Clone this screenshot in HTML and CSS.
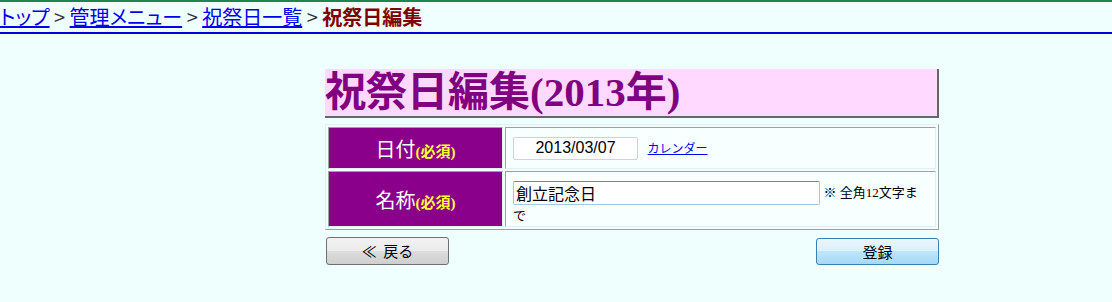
FILE: index.html
```html
<!DOCTYPE html>
<html lang="ja">
<head>
  <meta charset="UTF-8">
  <title>祝祭日編集</title>
  <link rel="stylesheet" href="styles.css">
</head>
<body>
  <div class="crumbs">
    <a href="#">トップ</a> &gt; <a href="#">管理メニュー</a> &gt; <a href="#">祝祭日一覧</a> &gt; <span class="current">祝祭日編集</span>
  </div>
  <div class="main">
    <h1 class="page-title">祝祭日編集(2013年)</h1>
    <table class="form-table">
      <tr class="row-date">
        <th>日付<span class="req">(必須)</span></th>
        <td>
          <input type="text" class="date-input" value="2013/03/07">
          <a href="#" class="cal-link">カレンダー</a>
        </td>
      </tr>
      <tr class="row-name">
        <th>名称<span class="req">(必須)</span></th>
        <td>
          <input type="text" class="name-input" value="創立記念日">
          <span class="note">※ 全角12文字まで</span>
        </td>
      </tr>
    </table>
    <div class="buttons">
      <button class="btn btn-back">≪&nbsp;&nbsp;戻る</button>
      <button class="btn btn-submit">登録</button>
    </div>
  </div>
</body>
</html>
```

FILE: styles.css
```css
* {
  box-sizing: border-box;
}
body {
  margin: 0;
  background-color: #eefffe;
  font-family: "Noto Sans CJK JP", sans-serif;
  color: #000;
}
.crumbs {
  border-top: 2px solid #1c8650;
  border-bottom: 2px solid #0000dd;
  height: 34px;
  line-height: 30px;
  font-size: 20px;
  font-feature-settings: "palt";
  color: #334;
  white-space: nowrap;
}
.crumbs a {
  color: #0000ee;
}
.crumbs .current {
  color: #800000;
  font-weight: bold;
}
.main {
  width: 614px;
  margin: 35px 0 0 325px;
}
.page-title {
  margin: 0;
  height: 49px;
  line-height: 47px;
  font-family: "Liberation Serif", "Noto Sans CJK JP", serif;
  font-size: 41px;
  font-weight: bold;
  color: #800080;
  background-color: #ffd9ff;
  border-right: 2px solid #666;
  border-bottom: 2px solid #666;
  padding-left: 0;
  white-space: nowrap;
}
.form-table {
  width: 614px;
  margin-top: 6px;
  table-layout: fixed;
  border-collapse: separate;
  border-spacing: 2px;
  border: 1px solid;
  border-color: #e4eeee #a0a0a0 #a0a0a0 #e4eeee;
}
.form-table th,
.form-table td {
  border: 1px solid;
  border-color: #a0a0a0 #e4eeee #e4eeee #a0a0a0;
}
.form-table th {
  width: 175px;
  background-color: #8b008b;
  color: #fff;
  font-size: 20px;
  font-weight: normal;
  text-align: center;
  padding: 0;
}
.row-date th, .row-date td {
  height: 42px;
}
.row-name th, .row-name td {
  height: 56px;
}
.req {
  font-family: "Liberation Serif", "Noto Sans CJK JP", serif;
  font-size: 15px;
  font-weight: bold;
  color: #ffff33;
}
.form-table td {
  background-color: #f8ffff;
  padding: 3px 14px 3px 7px;
  line-height: 16px;
}
.row-name td {
  padding-top: 9px;
  padding-bottom: 2px;
}
.date-input {
  width: 125px;
  height: 23px;
  font-family: "Liberation Sans", sans-serif;
  font-size: 16px;
  text-align: center;
  border: 1px solid #ccd4d8;
  border-radius: 2px;
  background: #fff;
  padding: 0;
  vertical-align: middle;
}
.cal-link {
  margin-left: 6px;
  font-size: 12px;
  color: #0000ee;
  vertical-align: middle;
}
.name-input {
  width: 307px;
  height: 24px;
  font-family: "Noto Sans CJK JP", sans-serif;
  font-size: 16px;
  border: 1px solid #a9c6dd;
  border-top-color: #5d8cb5;
  border-radius: 2px;
  background: #fff;
  padding: 0 2px;
  vertical-align: middle;
}
.note {
  font-family: "Liberation Serif", "Noto Sans CJK JP", serif;
  font-size: 13px;
  line-height: 16px;
}
.buttons {
  display: flex;
  justify-content: space-between;
  margin-top: 7px;
}
.btn {
  width: 123px;
  height: 28px;
  font-family: "Noto Sans CJK JP", sans-serif;
  font-size: 15px;
  line-height: 20px;
  color: #000;
  border-radius: 3px;
  padding: 0;
  margin-left: 1px;
}
.btn-back {
  border: 1px solid #707070;
  background: linear-gradient(#f2f2f2 0%, #ebebeb 50%, #dddddd 50%, #cfcfcf 100%);
}
.btn-submit {
  height: 27px;
  margin-top: 1px;
  border: 1px solid #3c7fb1;
  background: linear-gradient(#eaf6fd 0%, #d9f0fc 50%, #bee6fd 50%, #a7d9f5 100%);
}
```
